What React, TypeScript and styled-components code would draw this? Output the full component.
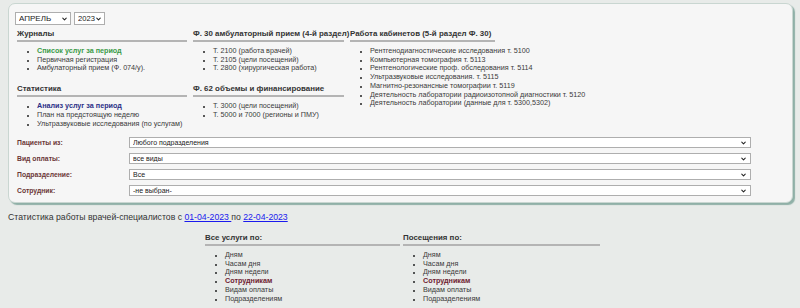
import React from 'react'
import styled, { createGlobalStyle } from 'styled-components';
import { ChevronDown } from 'lucide-react';

const Global = createGlobalStyle`
    html, body {
        margin: 0;
        padding: 0;
        background: #e8ebe9;
        font-family: "Liberation Sans", Arial, sans-serif;
        color: #333;
    }
`;

const Page = styled.div`
    padding: 3px 7px 0 8px;
    width: 800px;
    box-sizing: border-box;
`;

const Panel = styled.div`
    background: #f6f6f6;
    border: 1px solid #c9d6d1;
    border-radius: 7px;
    box-shadow: 2px 2px 1px #8fb0a7;
    padding: 8px 6px 8px 6px;
    height: 200px;
    box-sizing: border-box;
`;

const TopSelects = styled.div`
    display: flex;
    gap: 3px;
`;

const SelectBox = styled.div<{ $w: number; $h: number }>`
    position: relative;
    width: ${p => p.$w}px;
    height: ${p => p.$h}px;
    svg {
        position: absolute;
        right: ${p => (p.$h > 12 ? 3 : 4)}px;
        top: 50%;
        transform: translateY(-50%);
        pointer-events: none;
        color: #222;
    }
`;

const NativeSelect = styled.select<{ $fs: number }>`
    appearance: none;
    -webkit-appearance: none;
    display: block;
    width: 100%;
    height: 100%;
    box-sizing: border-box;
    font-size: ${p => p.$fs}px;
    line-height: 1;
    font-family: "Liberation Sans", Arial, sans-serif;
    border: 1px solid #aeaeae;
    background: #fff;
    color: #222;
    padding: 0 2px 0 3px;
    margin: 0;
    border-radius: 0;
    outline: none;
`;

const Columns = styled.div`
    display: grid;
    grid-template-columns: 170px 151px auto;
    column-gap: 6px;
    padding-left: 2px;
    margin-top: 4px;
`;

const Col = styled.div`
    display: flex;
    flex-direction: column;
`;

const Heading = styled.div<{ $fit?: boolean }>`
    font-size: 7.9px;
    font-weight: bold;
    color: #333;
    line-height: 10px;
    white-space: nowrap;
    padding-bottom: 1px;
    border-bottom: 2px solid #b4b4b4;
    width: ${p => (p.$fit ? 'fit-content' : 'auto')};
    padding-right: ${p => (p.$fit ? '4px' : '0')};
`;

const List = styled.ul<{ $gapAfter?: number }>`
    margin: 5px 0 ${p => p.$gapAfter ?? 0}px 0;
    padding-left: 20px;
    font-size: 7.2px;
    line-height: 8.7px;
    list-style: disc;
    white-space: nowrap;
`;

const Item = styled.li<{ $tone?: 'green' | 'blue' | 'red' }>`
    color: ${p => (p.$tone === 'green' ? '#3a9a48' : p.$tone === 'blue' ? '#2b2f86' : p.$tone === 'red' ? '#6e2230' : '#3a3a3a')};
    font-weight: ${p => (p.$tone ? 'bold' : 'normal')};
    &::marker {
        color: #222;
        font-size: 6px;
    }
`;

const Form = styled.div`
    display: flex;
    flex-direction: column;
    gap: 5px;
    margin-top: 9px;
    padding-left: 2px;
`;

const FormRow = styled.div`
    display: grid;
    grid-template-columns: 112px 622px;
    align-items: center;
`;

const Label = styled.label`
    font-size: 6.8px;
    line-height: 11px;
    font-weight: bold;
    color: #6b3636;
`;

const Summary = styled.div`
    font-size: 8.7px;
    color: #333;
    margin-top: 9px;
`;

const Link = styled.a`
    color: #1a1aee;
    text-decoration: underline;
`;

const Bottom = styled.div`
    display: grid;
    grid-template-columns: 195px 197px;
    column-gap: 3px;
    margin: 11px 0 0 197px;
`;

const Select = ({ w, h, fs, value }: { w: number; h: number; fs: number; value: string }) => (
    <SelectBox $w={w} $h={h}>
        <NativeSelect $fs={fs} defaultValue={value}>
            <option value={value}>{value}</option>
        </NativeSelect>
        <ChevronDown size={h > 12 ? 7 : 7} strokeWidth={3.5} />
    </SelectBox>
);

const filters = [
    ['Пациенты из:', 'Любого подразделения'],
    ['Вид оплаты:', 'все виды'],
    ['Подразделение:', 'Все'],
    ['Сотрудник:', '-не выбран-'],
];

const bottomItems = ['Дням', 'Часам дня', 'Дням недели', 'Сотрудникам', 'Видам оплаты', 'Подразделениям'];

export default function App() {
    return (
        <Page>
            <Global />
            <Panel>
                <TopSelects>
                    <Select w={56} h={13} fs={8} value="АПРЕЛЬ" />
                    <Select w={31} h={13} fs={7.6} value="2023" />
                </TopSelects>
                <Columns>
                    <Col>
                        <Heading>Журналы</Heading>
                        <List $gapAfter={11}>
                            <Item $tone="green">Список услуг за период</Item>
                            <Item>Первичная регистрация</Item>
                            <Item>Амбулаторный прием (Ф. 074/у).</Item>
                        </List>
                        <Heading>Статистика</Heading>
                        <List>
                            <Item $tone="blue">Анализ услуг за период</Item>
                            <Item>План на предстоящую неделю</Item>
                            <Item>Ультразвуковые исследования (по услугам)</Item>
                        </List>
                    </Col>
                    <Col>
                        <Heading>Ф. 30 амбулаторный прием (4-й раздел)</Heading>
                        <List $gapAfter={11}>
                            <Item>Т. 2100 (работа врачей)</Item>
                            <Item>Т. 2105 (цели посещений)</Item>
                            <Item>Т. 2800 (хирургическая работа)</Item>
                        </List>
                        <Heading>Ф. 62 объемы и финансирование</Heading>
                        <List>
                            <Item>Т. 3000 (цели посещений)</Item>
                            <Item>Т. 5000 и 7000 (регионы и ПМУ)</Item>
                        </List>
                    </Col>
                    <Col>
                        <Heading $fit>Работа кабинетов (5-й раздел Ф. 30)</Heading>
                        <List>
                            <Item>Рентгенодиагностические исследования т. 5100</Item>
                            <Item>Компьютерная томография т. 5113</Item>
                            <Item>Рентгенологические проф. обследования т. 5114</Item>
                            <Item>Ультразвуковые исследования. т. 5115</Item>
                            <Item>Магнитно-резонансные томографии т. 5119</Item>
                            <Item>Деятельность лаборатории радиоизотопной диагностики т. 5120</Item>
                            <Item>Деятельность лаборатории (данные для т. 5300,5302)</Item>
                        </List>
                    </Col>
                </Columns>
                <Form>
                    {filters.map(([label, value]) => (
                        <FormRow key={label}>
                            <Label>{label}</Label>
                            <Select w={622} h={11} fs={7} value={value} />
                        </FormRow>
                    ))}
                </Form>
            </Panel>
            <Summary>
                Статистика работы врачей-специалистов с <Link href="#">01-04-2023 </Link>по <Link href="#">22-04-2023</Link>
            </Summary>
            <Bottom>
                {['Все услуги по:', 'Посещения по:'].map(title => (
                    <Col key={title}>
                        <Heading>{title}</Heading>
                        <List>
                            {bottomItems.map(item => (
                                <Item key={item} $tone={item === 'Сотрудникам' ? 'red' : undefined}>{item}</Item>
                            ))}
                        </List>
                    </Col>
                ))}
            </Bottom>
        </Page>
    )
}
